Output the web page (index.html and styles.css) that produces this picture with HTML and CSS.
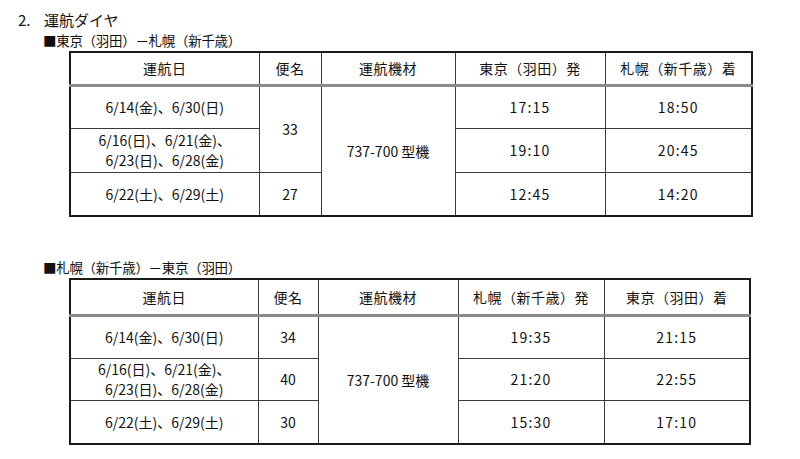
FILE: index.html
```html
<!DOCTYPE html>
<html lang="ja">
<head>
<meta charset="utf-8">
<link rel="stylesheet" href="styles.css">
</head>
<body>
<div class="page">
  <h2 class="title"><span class="num">2.</span>運航ダイヤ</h2>
  <h3 class="sub">■東京（羽田）－札幌（新千歳）</h3>
  <table class="tt t1">
    <colgroup><col class="c1"><col class="c2"><col class="c3"><col class="c4"><col class="c5"></colgroup>
    <thead>
      <tr class="head"><th>運航日</th><th>便名</th><th>運航機材</th><th>東京（羽田）発</th><th>札幌（新千歳）着</th></tr>
    </thead>
    <tbody>
      <tr class="r1"><td>6/14(金)、6/30(日)</td><td rowspan="2">33</td><td rowspan="3">737-700 型機</td><td class="tm">17:15</td><td class="tm">18:50</td></tr>
      <tr class="r2"><td>6/16(日)、6/21(金)、<br>6/23(日)、6/28(金)</td><td class="tm">19:10</td><td class="tm">20:45</td></tr>
      <tr class="r3"><td>6/22(土)、6/29(土)</td><td>27</td><td class="tm">12:45</td><td class="tm">14:20</td></tr>
    </tbody>
  </table>

  <h3 class="sub sub2">■札幌（新千歳）－東京（羽田）</h3>
  <table class="tt t2">
    <colgroup><col class="c1"><col class="c2"><col class="c3"><col class="c4"><col class="c5"></colgroup>
    <thead>
      <tr class="head"><th>運航日</th><th>便名</th><th>運航機材</th><th>札幌（新千歳）発</th><th>東京（羽田）着</th></tr>
    </thead>
    <tbody>
      <tr class="r1"><td>6/14(金)、6/30(日)</td><td>34</td><td rowspan="3">737-700 型機</td><td class="tm">19:35</td><td class="tm">21:15</td></tr>
      <tr class="r2"><td>6/16(日)、6/21(金)、<br>6/23(日)、6/28(金)</td><td>40</td><td class="tm">21:20</td><td class="tm">22:55</td></tr>
      <tr class="r3"><td>6/22(土)、6/29(土)</td><td>30</td><td class="tm">15:30</td><td class="tm">17:10</td></tr>
    </tbody>
  </table>
</div>
</body>
</html>
```
FILE: styles.css
```css
* { box-sizing: border-box; }
html, body { margin: 0; padding: 0; background: #fff; }
body {
  font-family: "Noto Sans CJK JP", "Noto Sans", sans-serif;
  color: #111;
  width: 800px;
  height: 459px;
  overflow: hidden;
}
.page { padding: 10px 0 0 18px; }
.title {
  margin: 0;
  font-size: 15px;
  font-weight: normal;
  line-height: 20px;
}
.title .num { display: inline-block; width: 26px; }
.sub {
  margin: 0 0 0 25px;
  font-size: 13.5px;
  font-weight: normal;
  line-height: 21px;
  letter-spacing: -0.3px;
}
.sub2 { margin-top: 40px; }
.tt {
  margin-left: 51px;
  border-collapse: collapse;
  table-layout: fixed;
  border: 2px solid #1a1a1a;
  font-size: 14px;
  line-height: 20px;
}
.tt th, .tt td {
  border: 1px solid #3a3a3a;
  text-align: center;
  vertical-align: middle;
  font-weight: normal;
  padding: 0;
}
.tt th { letter-spacing: 0.5px; }
.tt thead th { border-bottom: 3px solid #8a8a8a; }
.tt .tm { letter-spacing: 1.2px; }
.t1 { width: 682px; }
.t1 .c1 { width: 189px; }
.t1 .c2 { width: 62px; }
.t1 .c3 { width: 134px; }
.t1 .c4 { width: 150px; }
.t1 .c5 { width: 147px; }
.t1 .head { height: 33px; }
.t1 .r1 { height: 43px; }
.t1 .r2 { height: 44px; }
.t1 .r3 { height: 44px; }
.t2 { width: 680px; }
.t2 .c1 { width: 188px; }
.t2 .c2 { width: 60px; }
.t2 .c3 { width: 140px; }
.t2 .c4 { width: 146px; }
.t2 .c5 { width: 146px; }
.t2 .head { height: 36px; }
.t2 .r1 { height: 43px; }
.t2 .r2 { height: 42px; }
.t2 .r3 { height: 44px; }
```
